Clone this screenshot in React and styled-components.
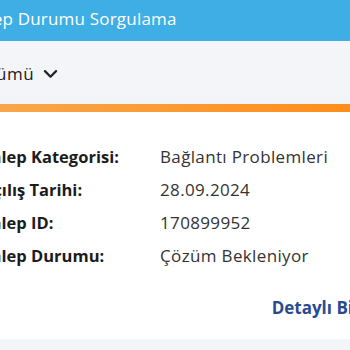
import React from "react";
import styled, { createGlobalStyle } from "styled-components";

const GlobalStyle = createGlobalStyle`
	* { box-sizing: border-box; }
	html, body {
		margin: 0;
		padding: 0;
		background: #f4f5f8;
		overflow: hidden;
	}
	body {
		font-family: "Open Sans", Lato, Arial, sans-serif;
	}
`;

const details = [
	{ id: 1, label: "Talep Kategorisi:", value: "Bağlantı Problemleri" },
	{ id: 2, label: "Açılış Tarihi:", value: "28.09.2024" },
	{ id: 3, label: "Talep ID:", value: "170899952" },
	{ id: 4, label: "Talep Durumu:", value: "Çözüm Bekleniyor" },
];

const App = () => {
	return (
		<>
			<GlobalStyle />
			<Page>
				<Header>
					<h1>Talep Durumu Sorgulama</h1>
				</Header>
				<Filter>
					<button type="button">
						Tümü
						<svg viewBox="0 0 24 24" width="19" height="19">
							<path
								d="M5 9l7 7 7-7"
								fill="none"
								stroke="currentColor"
								strokeWidth="2.8"
								strokeLinecap="round"
								strokeLinejoin="round"
							/>
						</svg>
					</button>
				</Filter>
				<Card>
					<dl>
						{details.map((item) => {
							const { id, label, value } = item;
							return (
								<Row key={id}>
									<dt>{label}</dt>
									<dd>{value}</dd>
								</Row>
							);
						})}
					</dl>
					<Footer>
						<a href="#detay">Detaylı Bilgi</a>
					</Footer>
				</Card>
			</Page>
		</>
	);
};

const Page = styled.main`
	width: 440px;
	margin-left: -40px;
	display: flex;
	flex-direction: column;
`;

const Header = styled.header`
	height: 41px;
	background: #3eaee4;
	padding-left: 9px;
	display: flex;
	align-items: center;

	h1 {
		margin: 0;
		color: #ffffff;
		font-size: 17px;
		font-weight: 400;
		letter-spacing: 0.2px;
		margin-top: -4px;
	}
`;

const Filter = styled.div`
	height: 63px;
	background: #f4f5f8;
	padding-left: 26px;
	display: flex;
	align-items: center;

	button {
		display: flex;
		align-items: center;
		gap: 7px;
		border: none;
		background: transparent;
		padding: 0;
		font-family: inherit;
		font-size: 17px;
		letter-spacing: 0.6px;
		color: #222222;
		margin-top: 1px;
	}
`;

const Card = styled.section`
	background: #ffffff;
	border-top: 8px solid #ff8c1a;
	border-image: linear-gradient(90deg, #f7a94f, #ff8a14) 1;
	border-left: none;
	border-right: none;
	border-bottom: none;
	padding: 33px 27px 0 22px;
	height: 235px;
	box-shadow: 0 2px 4px rgba(0, 0, 0, 0.08);

	dl {
		margin: 0;
		display: flex;
		flex-direction: column;
		gap: 10px;
	}
`;

const Row = styled.div`
	display: grid;
	grid-template-columns: 178px 1fr;
	line-height: 23px;

	dt {
		font-size: 16.5px;
		font-weight: 700;
		color: #1c1c1c;
	}
	dd {
		margin: 0;
		font-size: 17px;
		letter-spacing: 0.35px;
		color: #333333;
	}
`;

const Footer = styled.div`
	display: flex;
	justify-content: flex-end;
	margin-top: 29px;

	a {
		color: #284b8f;
		font-weight: 700;
		font-size: 17px;
		text-decoration: none;
	}
`;

export default App;
